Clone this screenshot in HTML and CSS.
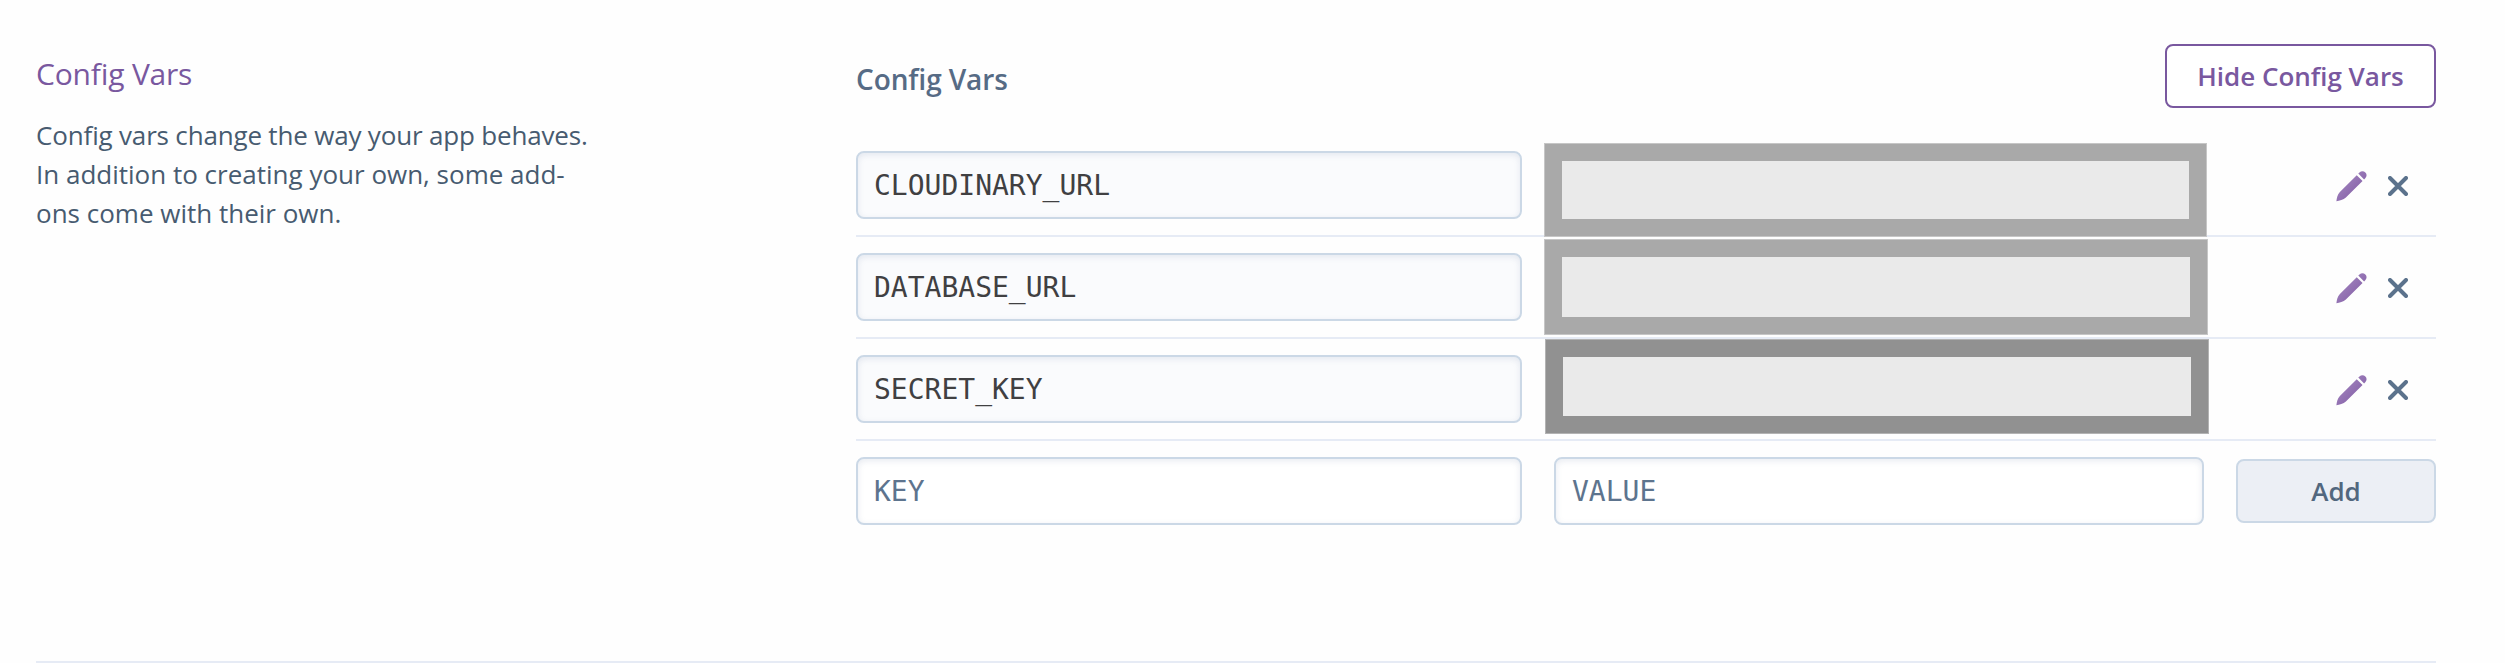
FILE: index.html
```html
<!DOCTYPE html>
<html lang="en">
<head>
<meta charset="utf-8">
<title>Config Vars</title>
<link rel="stylesheet" href="styles.css">
</head>
<body>
<svg class="defs" width="0" height="0" aria-hidden="true">
  <defs>
    <linearGradient id="purple" x1="0" y1="0" x2="1" y2="1">
      <stop offset="0.2" stop-color="#a184bd"/>
      <stop offset="0.8" stop-color="#8560a8"/>
    </linearGradient>
    <symbol id="pencil" viewBox="0 0 32 32">
      <path fill="url(#purple)" d="M21.400 4.800 27.400 10.800 10.200 27.800C7.700 30 3.500 31 .4 31.800 .8 28.400 1.600 24.500 4 22.100ZM23 3.200 24.200 2C26.200 .2 28.600 .4 30.300 2 32 3.700 32 6 30.200 8L29 9.200Z"/>
    </symbol>
    <symbol id="cross" viewBox="0 0 20 20">
      <path d="M2 2 18 18M18 2 2 18" fill="none" stroke="#5b728c" stroke-width="4" stroke-linecap="round"/>
    </symbol>
  </defs>
</svg>
<main class="section">
  <aside class="intro">
    <h2 class="intro-title">Config Vars</h2>
    <p class="intro-text"><span class="lead">Config vars change the way your app behaves.</span><br>In addition to creating your own, some add-<br>ons come with their own.</p>
  </aside>
  <div class="panel">
    <header class="panel-head">
      <h3 class="panel-title">Config Vars</h3>
      <button class="btn btn-outline">Hide Config Vars</button>
    </header>
    <div class="row">
      <div class="field readonly">CLOUDINARY_URL</div>
      <div class="value"><div class="mask mask-a"></div></div>
      <div class="actions"><svg class="pencil"><use href="#pencil"/></svg><svg class="cross"><use href="#cross"/></svg></div>
    </div>
    <div class="row">
      <div class="field readonly">DATABASE_URL</div>
      <div class="value"><div class="mask mask-b"></div></div>
      <div class="actions"><svg class="pencil"><use href="#pencil"/></svg><svg class="cross"><use href="#cross"/></svg></div>
    </div>
    <div class="row">
      <div class="field readonly">SECRET_KEY</div>
      <div class="value"><div class="mask mask-c"></div></div>
      <div class="actions"><svg class="pencil"><use href="#pencil"/></svg><svg class="cross"><use href="#cross"/></svg></div>
    </div>
    <div class="row row-new">
      <div class="field placeholder">KEY</div>
      <div class="field placeholder">VALUE</div>
      <button class="btn btn-add">Add</button>
    </div>
  </div>
</main>
</body>
</html>
```
FILE: styles.css
```css
* { box-sizing: border-box; }
body {
  margin: 0;
  background: #fefefe;
  font-family: "Open Sans", "Noto Sans", sans-serif;
  font-stretch: 90%;
  font-feature-settings: "liga" 1;
}
.defs { display: block; }
h2, h3, p { margin: 0; }
.section {
  display: grid;
  grid-template-columns: 820px 1580px;
  width: 2400px;
  height: 663px;
  margin-left: 36px;
  border-bottom: 2px solid #e6ebf5;
}
.intro { padding-top: 54px; }
.intro-title {
  font-size: 30px;
  line-height: 40px;
  font-weight: 400;
  letter-spacing: -.2px;
  color: #79589f;
}
.intro-text {
  margin-top: 22px;
  font-size: 26px;
  line-height: 39px;
  color: #475b70;
  white-space: nowrap;
}
.lead { letter-spacing: -.18px; }
.panel { padding-top: 44px; }
.panel-head {
  display: flex;
  justify-content: space-between;
  align-items: flex-start;
  height: 91px;
}
.panel-title {
  padding-top: 15px;
  font-size: 28px;
  line-height: 40px;
  font-weight: 600;
  letter-spacing: -.1px;
  color: #566b85;
}
.btn {
  height: 64px;
  padding: 0;
  border-radius: 8px;
  font-family: inherit;
  font-size: 26px;
  font-weight: 600;
  font-stretch: 90%;
}
.btn-outline {
  width: 271px;
  border: 2px solid #79589f;
  background: #fff;
  color: #79589f;
}
.row {
  display: grid;
  grid-template-columns: 666px 650px 200px;
  column-gap: 32px;
  align-items: center;
  height: 102px;
  border-bottom: 2px solid #e6ebf5;
}
.row-new { border-bottom: 0; height: 100px; }
.field {
  height: 68px;
  padding: 0 16px;
  border: 2px solid #cbd8e6;
  border-radius: 8px;
  background: #fff;
  box-shadow: inset 0 2px 6px rgba(80, 100, 150, .13);
  font: 28px/66px "DejaVu Sans Mono", monospace;
}
.readonly { background: #fafbfd; color: #404042; }
.placeholder { color: #5d748e; }
.btn-add {
  border: 2px solid #cbd8e6;
  background: #eceff5;
  color: #52677e;
}
.actions {
  display: flex;
  justify-content: flex-end;
  align-items: center;
  gap: 21px;
  padding: 2px 28px 0 0;
}
.pencil { width: 31px; height: 32px; }
.cross { width: 20px; height: 20px; }
.value { position: relative; height: 68px; }
.mask {
  position: absolute;
  z-index: 1;
  left: -10px;
  width: 663px;
  border: 18px solid #a9a9a9;
  background: #eaeaea;
  outline: 1px solid #c6c6c6;
  outline-offset: -1px;
}
.mask-a { top: -8px; height: 94px; }
.mask-b { top: -14px; width: 664px; height: 96px; }
.mask-c { top: -16px; left: -9px; width: 664px; height: 95px; border-color: #919191; outline-color: #b3b3b3; }
```
